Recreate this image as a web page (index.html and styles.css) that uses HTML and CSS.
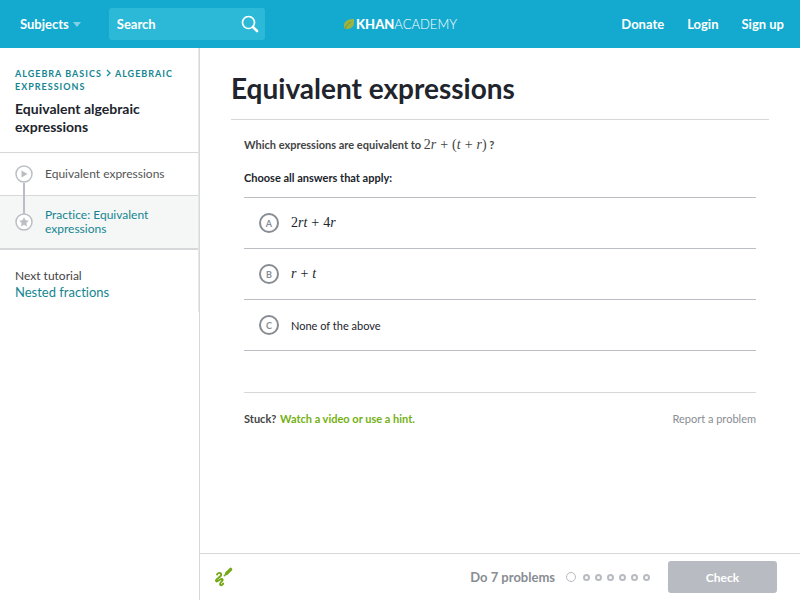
FILE: index.html
```html
<!DOCTYPE html>
<html lang="en">
<head>
    <meta charset="UTF-8">
    <meta name="viewport" content="width=device-width, initial-scale=1.0">
    <title>Equivalent expressions | Khan Academy</title>
    <link rel="stylesheet" href="styles.css">
</head>
<body>
    <header class="topbar">
        <div class="topbar-left">
            <button class="subjects" type="button">Subjects <span class="caret"></span></button>
            <form class="search">
                <input type="text" placeholder="Search" aria-label="Search">
                <button type="submit" aria-label="Submit search">
                    <svg width="18" height="18" viewBox="0 0 18 18" fill="none" stroke="#fff">
                        <circle cx="7.5" cy="7.5" r="6" stroke-width="1.7"/>
                        <path d="M12 12l4 4" stroke-width="2.6" stroke-linecap="round"/>
                    </svg>
                </button>
            </form>
        </div>
        <a class="logo" href="#">
            <svg width="12" height="12" viewBox="0 0 12 12">
                <path d="M11 1C6 1 1 2.5 1 7.5c0 1.5.4 2.600 1 3.500 5 .2 9-1.500 9-6.500z" fill="#9cb443"/>
                <path d="M2 11C3 8 5 5.5 8 4" stroke="#71992f" stroke-width="1" fill="none"/>
            </svg>
            <span><b>KHAN</b>ACADEMY</span>
        </a>
        <nav class="topbar-right">
            <a href="#">Donate</a>
            <a href="#">Login</a>
            <a href="#">Sign up</a>
        </nav>
    </header>

    <div class="page">
        <aside class="sidebar">
            <div class="sidebar-inner">
                <div class="tutorial">
                    <div class="breadcrumbs">
                        <a href="#">Algebra basics</a>
                        <svg width="5" height="8" viewBox="0 0 5 8" fill="none" stroke="#1c8f9c" stroke-width="1.3"><path d="M1 1l3 3-3 3"/></svg>
                        <a href="#">Algebraic expressions</a>
                    </div>
                    <h2>Equivalent algebraic expressions</h2>
                </div>
                <ul class="lessons">
                    <li>
                        <a href="#">
                            <svg class="lesson-icon" width="18" height="18" viewBox="0 0 18 18">
                                <circle cx="9" cy="9" r="8" fill="#fff" stroke="#babec2" stroke-width="1.5"/>
                                <path d="M6.500 5.500v7l6-3.500z" fill="#babec2"/>
                            </svg>
                            Equivalent expressions
                        </a>
                    </li>
                    <li class="current">
                        <a href="#">
                            <svg class="lesson-icon" width="18" height="18" viewBox="0 0 18 18">
                                <circle cx="9" cy="9" r="8" fill="#fff" stroke="#babec2" stroke-width="1.5"/>
                                <path d="M9 4.200l1.500 3.100 3.300.4-2.400 2.300.6 3.400-3-1.700-3 1.700.6-3.400-2.400-2.300 3.300-.4z" fill="#babec2"/>
                            </svg>
                            Practice: Equivalent expressions
                        </a>
                    </li>
                </ul>
                <div class="next">
                    <p>Next tutorial</p>
                    <a href="#">Nested fractions</a>
                </div>
            </div>
        </aside>

        <main class="content">
            <article class="exercise">
                <h1>Equivalent expressions</h1>
                <div class="problem">
                    <p class="question">Which expressions are equivalent to <span class="math">2<i>r</i><span class="op">+</span>(<i>t</i><span class="op">+</span><i>r</i>)</span> ?</p>
                    <fieldset class="answers">
                        <legend>Choose all answers that apply:</legend>
                        <label class="answer">
                            <span class="choice"><input type="checkbox" name="answer"><span>A</span></span>
                            <span class="math">2<i>rt</i><span class="op">+</span>4<i>r</i></span>
                        </label>
                        <label class="answer">
                            <span class="choice"><input type="checkbox" name="answer"><span>B</span></span>
                            <span class="math"><i>r</i><span class="op">+</span><i>t</i></span>
                        </label>
                        <label class="answer">
                            <span class="choice"><input type="checkbox" name="answer"><span>C</span></span>
                            <span>None of the above</span>
                        </label>
                    </fieldset>
                    <div class="help">
                        <p>Stuck? <a href="#">Watch a video or use a hint.</a></p>
                        <a class="report" href="#">Report a problem</a>
                    </div>
                </div>
            </article>

            <footer class="taskbar">
                <button class="scratchpad" type="button" aria-label="Scratchpad">
                    <svg width="20" height="20" viewBox="0 0 20 20" fill="none" stroke="#74a814" stroke-linecap="round">
                        <path d="M4 7.500C5.500 5 9 5.500 8 8.500 7 10.500 2.500 12 3 14c.8 2 3.500-2.500 6-2 2.500 1-2.500 3.500-2 5.500.6 1.500 2.500.5 3.200-1" stroke-width="1.900"/>
                        <path d="M13.500 6.500l4.200-4.200" stroke-width="3.200"/>
                        <path d="M11.300 8.800l1.500-1.500" stroke-width="1.500"/>
                    </svg>
                </button>
                <div class="progress">
                    <span>Do 7 problems</span>
                    <ol class="dots" aria-label="Progress">
                        <li class="active"></li>
                        <li></li>
                        <li></li>
                        <li></li>
                        <li></li>
                        <li></li>
                        <li></li>
                    </ol>
                </div>
                <button class="check" type="button">Check</button>
            </footer>
        </main>
    </div>
</body>
</html>
```
FILE: styles.css
```css
* {
    box-sizing: border-box;
}

body {
    display: flex;
    flex-direction: column;
    min-height: 100vh;
    margin: 0;
    background: #fff;
    color: #444;
    font-family: Lato, "Liberation Sans", sans-serif;
    font-size: 12px;
    font-variant-ligatures: none;
}

h1, h2, p, ul, ol {
    margin: 0;
    padding: 0;
}

ul, ol {
    list-style: none;
}

a {
    color: #148590;
    text-decoration: none;
}

button, input {
    border: 0;
    padding: 0;
    background: none;
    font: inherit;
    color: inherit;
}

button {
    cursor: pointer;
}

/* Top bar */
.topbar {
    display: grid;
    grid-template-columns: 1fr auto 1fr;
    align-items: center;
    height: 48px;
    padding: 0 16px 0 20px;
    background: #14aacf;
    color: #fff;
    font-size: 13px;
    font-weight: bold;
}

.topbar a {
    color: #fff;
}

.topbar-left {
    display: flex;
    align-items: center;
    gap: 28px;
}

.subjects {
    display: flex;
    align-items: center;
    gap: 4px;
}

.caret {
    border: 4px solid transparent;
    border-top: 5px solid #7fd2e6;
    border-bottom: 0;
}

.search {
    display: flex;
    align-items: center;
    width: 156px;
    height: 32px;
    padding: 0 6px 0 8px;
    border-radius: 3px;
    background: #2cb9d8;
}

.search input {
    flex: 1;
    min-width: 0;
    outline: 0;
}

.search input::placeholder {
    color: #fff;
    opacity: 1;
}

.search svg, .logo svg, .scratchpad svg {
    display: block;
}

.logo {
    display: flex;
    align-items: center;
    gap: 1px;
    padding-right: 4px;
    font-weight: 300;
}

.logo b {
    font-weight: 900;
}

.topbar-right {
    display: flex;
    justify-content: flex-end;
    gap: 23px;
}

/* Page */
.page {
    display: flex;
    flex: 1;
}

.sidebar {
    flex: none;
    width: 200px;
    border-right: 1px solid #d6d8da;
}

.sidebar-inner {
    border-right: 1px solid #e6e8ea;
}

.tutorial {
    padding: 19px 15px 15px;
}

.breadcrumbs {
    font-size: 9px;
    font-weight: bold;
    line-height: 13px;
    letter-spacing: 1px;
    text-transform: uppercase;
}

.breadcrumbs svg {
    margin: 0 1px;
}

.tutorial h2 {
    margin-top: 7px;
    padding-bottom: 1px;
    color: #21242c;
    font-size: 14px;
    line-height: 18px;
}

.lessons {
    border-bottom: 2px solid #d6d8da;
}

.lessons li {
    border-top: 1px solid #d6d8da;
}

.lessons a {
    position: relative;
    display: flex;
    align-items: center;
    gap: 12px;
    padding: 12px 15px;
    color: #555;
    line-height: 14px;
}

.lessons .current a {
    background: #f5f7f7;
    color: #148590;
}

.lesson-icon {
    position: relative;
    z-index: 1;
    flex: none;
}

/* line joining the two lesson icons */
.lessons li:first-child a::after {
    content: "";
    position: absolute;
    z-index: 1;
    top: 30px;
    left: 23px;
    width: 2px;
    height: 31px;
    background: #babec2;
}

.next {
    padding: 17px 15px 11px;
    line-height: 17px;
}

.next a {
    font-size: 13px;
}

.content {
    display: flex;
    flex: 1;
    flex-direction: column;
    min-width: 0;
}

.exercise {
    flex: 1;
    padding: 20px 31px;
}

.exercise h1 {
    padding-bottom: 11px;
    border-bottom: 1px solid #d6d8da;
    color: #21242c;
    font-size: 28px;
    line-height: 40px;
}

.problem {
    padding: 16px 13px;
}

.question {
    font-size: 11px;
    font-weight: bold;
    line-height: 18px;
}

.math {
    font-family: "Liberation Serif", serif;
    font-size: 14px;
    font-weight: normal;
}

.op {
    margin: 0 4px;
}

.answers {
    margin: 16px 0 0;
    padding: 0;
    border: 0;
    border-bottom: 1px solid #babec2;
    color: #21242c;
    font-size: 11px;
}

.answers legend {
    padding: 0 0 11px;
    font-weight: bold;
    line-height: 16px;
}

.answer {
    display: flex;
    align-items: center;
    gap: 12px;
    height: 51px;
    padding: 0 15px;
    border-top: 1px solid #babec2;
    cursor: pointer;
}

.choice {
    display: grid;
    place-items: center;
    color: #888d93;
    font-size: 9px;
    font-weight: bold;
}

.choice > * {
    grid-area: 1 / 1;
}

.choice input {
    appearance: none;
    width: 20px;
    height: 20px;
    margin: 0;
    border: 2px solid #888d93;
    border-radius: 50%;
}

.help {
    display: flex;
    justify-content: space-between;
    margin-top: 41px;
    padding-top: 18px;
    border-top: 1px solid #d6d8da;
    font-size: 11px;
    line-height: 16px;
}

.help p {
    font-weight: bold;
}

.help p a {
    margin-left: 1px;
    color: #74b014;
}

.help .report {
    color: #888d93;
}

/* Bottom bar */
.taskbar {
    display: flex;
    align-items: center;
    height: 47px;
    padding: 0 23px 0 13px;
    border-top: 1px solid #d6d8da;
}

.progress {
    display: flex;
    align-items: center;
    gap: 11px;
    margin-left: auto;
    color: #888d93;
    font-size: 13px;
    font-weight: bold;
}

.dots {
    display: flex;
    align-items: center;
    gap: 5px;
}

.dots li {
    width: 7px;
    height: 7px;
    border: 2px solid #b8bbc1;
    border-radius: 50%;
}

.dots .active {
    width: 10px;
    height: 10px;
    margin-right: 2px;
    border-width: 1px;
}

.check {
    width: 109px;
    height: 32px;
    margin-left: 18px;
    border-radius: 3px;
    background: #b8bbc1;
    color: #fff;
    font-size: 12px;
    font-weight: bold;
}
```
